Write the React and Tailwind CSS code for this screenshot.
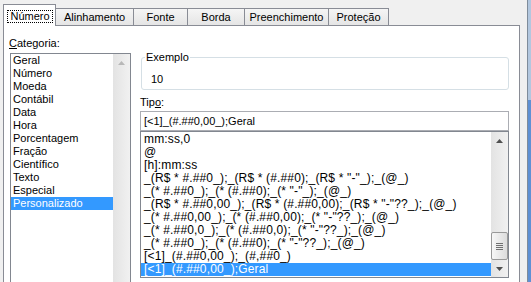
import React from 'react';

const tabs = [
  { label: 'Alinhamento', w: 'w-[78px]' },
  { label: 'Fonte', w: 'w-[54px]' },
  { label: 'Borda', w: 'w-[57px]' },
  { label: 'Preenchimento', w: 'w-[84px]' },
  { label: 'Proteção', w: 'w-[60px]' },
];

const categories = [
  'Geral',
  'Número',
  'Moeda',
  'Contábil',
  'Data',
  'Hora',
  'Porcentagem',
  'Fração',
  'Científico',
  'Texto',
  'Especial',
  'Personalizado',
];

const formats = [
  'mm:ss,0',
  '@',
  '[h]:mm:ss',
  '_(R$ * #.##0_);_(R$ * (#.##0);_(R$ * "-"_);_(@_)',
  '_(* #.##0_);_(* (#.##0);_(* "-"_);_(@_)',
  '_(R$ * #.##0,00_);_(R$ * (#.##0,00);_(R$ * "-"??_);_(@_)',
  '_(* #.##0,00_);_(* (#.##0,00);_(* "-"??_);_(@_)',
  '_(* #.##0,0_);_(* (#.##0,0);_(* "-"??_);_(@_)',
  '_(* #.##0_);_(* (#.##0);_(* "-"??_);_(@_)',
  '[<1]_(#.##0,00_);_(#,##0_)',
  '[<1]_(#.##0,00_);Geral',
];

const Arrow = ({ up, disabled }) => (
  <div className="h-[17px] flex items-center justify-center shrink-0">
    <svg width="7" height="4" viewBox="0 0 7 4">
      <path d={up ? 'M0 4L3.5 0L7 4Z' : 'M0 0L7 0L3.5 4Z'} fill={disabled ? '#b8b8b8' : '#505050'} />
    </svg>
  </div>
);

const App = () => {
  return (
    <div className="w-[531px] h-[282px] overflow-hidden bg-[#f0f0f0] flex text-[11px] text-black font-['Liberation_Sans',Arial,sans-serif]">
      <div className="w-[527px] flex flex-col pl-[3px] pt-[4px] pr-[7px]">
        {/* Tabs */}
        <div className="flex items-end h-[21px] relative z-10">
          <div className="w-[53px] h-[22px] -mb-px bg-white border-l border-t border-r border-[#898c95] pt-[5px]">
            <div className="ml-[3px] w-[46px] h-[13px] border border-dotted border-black flex items-center justify-center leading-[11px]">
              Número
            </div>
          </div>
          {tabs.map(t => (
            <div
              key={t.label}
              className={`${t.w} h-[17px] border-t border-r border-[#898c95] bg-[linear-gradient(#f5f5f5,#e5e5e5)] flex items-center justify-center leading-[13px]`}
            >
              {t.label}
            </div>
          ))}
        </div>

        {/* Panel */}
        <div className="flex-1 border border-[#898c95] bg-white flex">
          {/* Category column */}
          <div className="w-[127px] pl-[5px] pt-[11px] flex flex-col">
            <div className="h-[13px] leading-[13px]">
              <span className="underline">C</span>ategoria:
            </div>
            <div className="mt-[3px] ml-[1px] w-[121px] h-[240px] border border-[#828790] flex">
              <div className="flex-1 flex flex-col">
                {categories.map(c => (
                  <div
                    key={c}
                    className={`h-[13px] leading-[13px] pl-[2px] ${c === 'Personalizado' ? 'bg-[#3399ff] text-white' : ''}`}
                  >
                    {c}
                  </div>
                ))}
              </div>
              <div className="w-[17px] bg-[linear-gradient(to_right,#e3e3e3,#f1f1f1)]">
                <Arrow up disabled />
              </div>
            </div>
          </div>

          {/* Right column */}
          <div className="ml-[9px] w-[369px] pt-[25px] flex flex-col">
            <fieldset className="ml-[1px] w-[368px] border border-[#d5dfe5] rounded-[3px] px-0 pb-[3px]">
              <legend className="ml-[3px] px-[1px] leading-[13px]">Exemplo</legend>
              <div className="pl-[9px] pt-[9px] leading-[13px]">10</div>
            </fieldset>

            <div className="mt-[6px] h-[13px] leading-[13px]">
              Tip<span className="underline">o</span>:
            </div>

            <div className="mt-[2px] h-[20px] border border-[#abadb3] flex items-center pl-[3px]">
              [&lt;1]_(#.##0,00_);Geral
            </div>

            <div className="h-[147px] border border-[#828790] flex">
              <div className="flex-1 pt-[1px] flex flex-col text-[12px] tracking-[0.15px]">
                {formats.map((f, i) => (
                  <div
                    key={f}
                    className={`h-[13px] leading-[13px] pl-[3px] whitespace-pre ${i === formats.length - 1 ? 'bg-[#3399ff] text-white' : ''}`}
                  >
                    {f}
                  </div>
                ))}
              </div>
              <div className="w-[17px] flex flex-col bg-[linear-gradient(to_right,#e3e3e3,#f1f1f1)]">
                <Arrow up />
                <div className="flex-1" />
                <div className="h-[28px] border border-[#999] rounded-[2px] bg-[linear-gradient(to_right,#f7f7f7,#dcdcdc)] flex flex-col items-center justify-center gap-[1px]">
                  <div className="w-[7px] h-px bg-[#707070]" />
                  <div className="w-[7px] h-px bg-[#707070]" />
                  <div className="w-[7px] h-px bg-[#707070]" />
                  <div className="w-[7px] h-px bg-[#707070]" />
                </div>
                <Arrow />
              </div>
            </div>
          </div>
        </div>
      </div>

      {/* Window frame */}
      <div className="w-[4px] border-l border-[#7f8c9a] bg-[linear-gradient(to_bottom,#b2c7df_0,#b2c7df_100px,#5e90d4_100px)]" />
    </div>
  );
};

export default App;
